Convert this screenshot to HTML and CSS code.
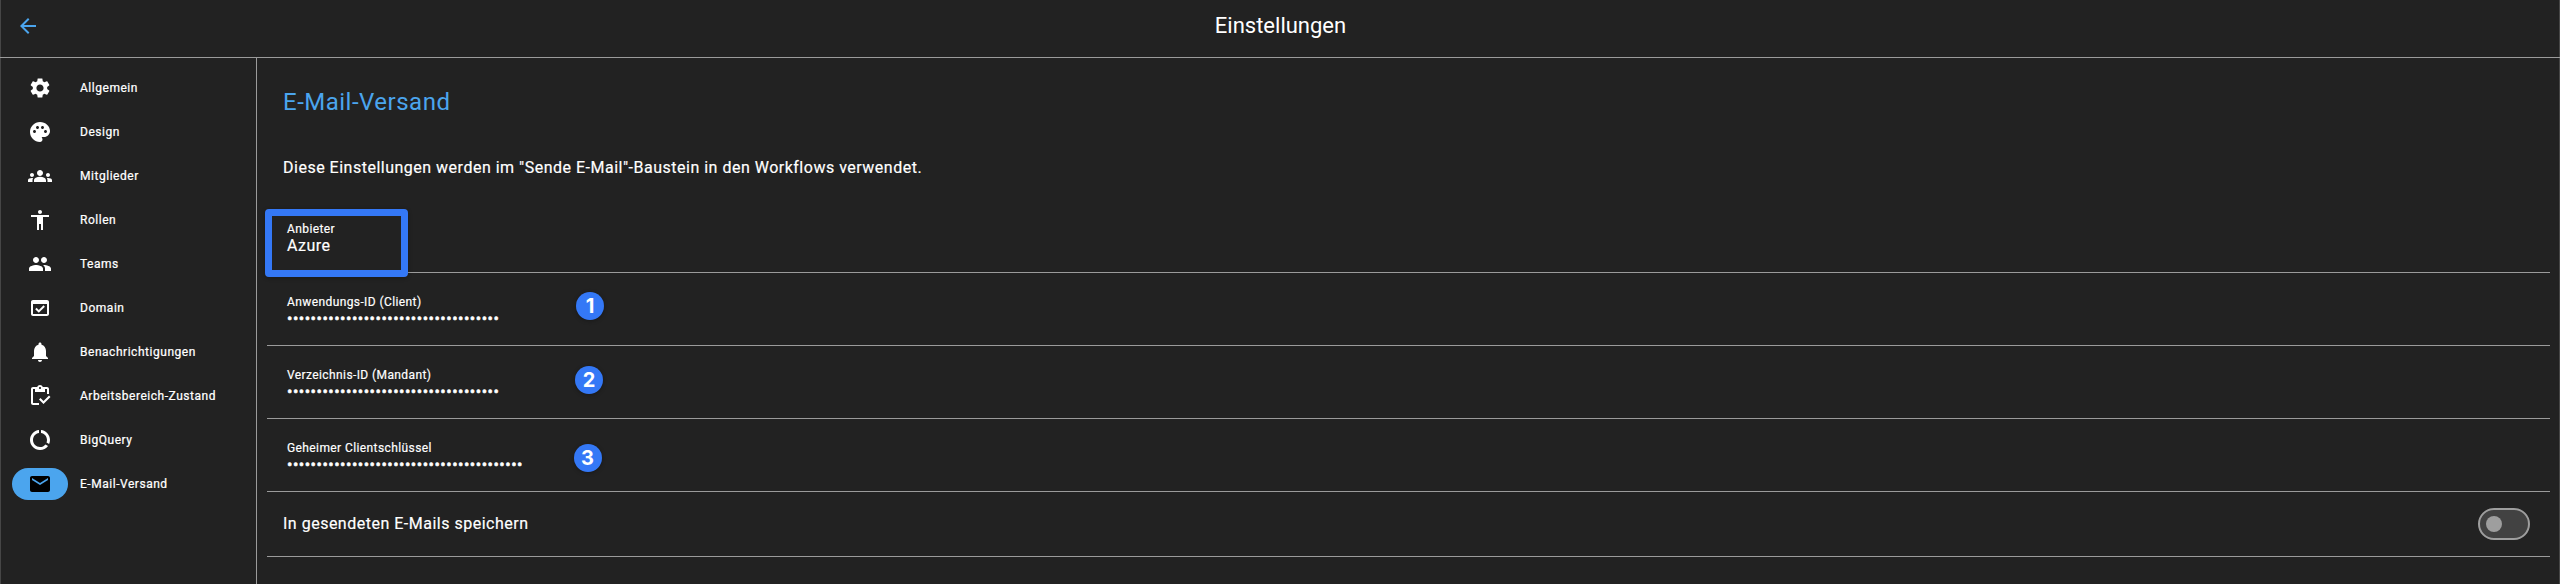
FILE: index.html
```html
<!DOCTYPE html>
<html lang="de">
<head>
<meta charset="utf-8">
<title>Einstellungen</title>
<link rel="stylesheet" href="styles.css">
</head>
<body>
<div class="app">
  <header class="topbar">
    <svg class="icon back" viewBox="0 0 24 24"><path d="M20 11H7.83l5.59-5.59L12 4l-8 8 8 8 1.41-1.41L7.83 13H20v-2z"/></svg>
    <h1 class="topbar-title">Einstellungen</h1>
  </header>
  <div class="body">
    <nav class="sidebar">
      <a class="nav-item"><span class="pill"><svg class="icon" viewBox="0 0 24 24"><path d="M19.14 12.94c.04-.3.06-.61.06-.94 0-.32-.02-.64-.07-.94l2.03-1.58c.18-.14.23-.41.12-.61l-1.92-3.32c-.12-.22-.37-.29-.59-.22l-2.39.96c-.5-.38-1.03-.7-1.62-.94l-.36-2.54c-.04-.24-.24-.41-.48-.41h-3.84c-.24 0-.43.17-.47.41l-.36 2.54c-.59.24-1.13.57-1.62.94l-2.39-.96c-.22-.08-.47 0-.59.22L2.74 8.87c-.12.21-.08.47.12.61l2.03 1.58c-.05.3-.09.63-.09.94s.02.64.07.94l-2.03 1.58c-.18.14-.23.41-.12.61l1.92 3.32c.12.22.37.29.59.22l2.39-.96c.5.38 1.03.7 1.62.94l.36 2.54c.05.24.24.41.48.41h3.84c.24 0 .44-.17.47-.41l.36-2.54c.59-.24 1.13-.56 1.62-.94l2.39.96c.22.08.47 0 .59-.22l1.92-3.32c.12-.22.07-.47-.12-.61l-2.01-1.58zM12 15.6c-1.98 0-3.6-1.62-3.6-3.6s1.62-3.6 3.6-3.6 3.6 1.62 3.6 3.6-1.62 3.6-3.6 3.6z"/></svg></span><span>Allgemein</span></a>
      <a class="nav-item"><span class="pill"><svg class="icon" viewBox="0 0 24 24"><path d="M12 2C6.49 2 2 6.49 2 12s4.49 10 10 10c1.38 0 2.5-1.12 2.5-2.5 0-.61-.23-1.2-.64-1.67-.08-.1-.13-.21-.13-.33 0-.28.22-.5.5-.5H16c3.31 0 6-2.69 6-6 0-4.96-4.49-9-10-9zm-5.5 11c-.83 0-1.5-.67-1.5-1.5S5.67 10 6.5 10s1.5.67 1.5 1.5S7.33 13 6.5 13zm3-4C8.67 9 8 8.33 8 7.500S8.670 6 9.500 6s1.500.670 1.500 1.500S10.330 9 9.500 9zm5 0c-.83 0-1.500-.670-1.500-1.500S13.670 6 14.500 6s1.500.670 1.500 1.500S15.330 9 14.500 9zm3 4c-.83 0-1.500-.670-1.500-1.500s.670-1.500 1.500-1.500 1.500.670 1.500 1.500-.670 1.500-1.500 1.500z"/></svg></span><span>Design</span></a>
      <a class="nav-item"><span class="pill"><svg class="icon" viewBox="0 0 24 24"><path d="M12 12.750c1.630 0 3.070.390 4.240.900 1.080.480 1.760 1.560 1.760 2.730V18H6v-1.610c0-1.180.680-2.260 1.760-2.730 1.170-.520 2.610-.910 4.240-.910zM4 13c1.100 0 2-.900 2-2s-.900-2-2-2-2 .900-2 2 .900 2 2 2zm1.130 1.100C4.760 14.040 4.390 14 4 14c-.990 0-1.930.210-2.780.580C.480 14.900 0 15.620 0 16.430V18h4.500v-1.610c0-.830.230-1.610.630-2.290zM20 13c1.100 0 2-.900 2-2s-.900-2-2-2-2 .900-2 2 .900 2 2 2zm4 3.430c0-.810-.480-1.530-1.220-1.850-.850-.370-1.790-.580-2.780-.580-.390 0-.760.040-1.130.100.400.680.630 1.460.630 2.290V18H24v-1.570zM12 6c1.660 0 3 1.340 3 3s-1.340 3-3 3-3-1.340-3-3 1.340-3 3-3z"/></svg></span><span>Mitglieder</span></a>
      <a class="nav-item"><span class="pill"><svg class="icon" viewBox="0 0 24 24"><path d="M12 2c1.100 0 2 .900 2 2s-.900 2-2 2-2-.900-2-2 .900-2 2-2zm9 7h-6v13h-2v-6h-2v6H9V9H3V7h18v2z"/></svg></span><span>Rollen</span></a>
      <a class="nav-item"><span class="pill"><svg class="icon" viewBox="0 0 24 24"><path d="M16 11c1.660 0 2.990-1.340 2.990-3S17.660 5 16 5s-3 1.340-3 3 1.340 3 3 3zm-8 0c1.660 0 2.990-1.340 2.990-3S9.660 5 8 5 5 6.340 5 8s1.340 3 3 3zm0 2c-2.330 0-7 1.170-7 3.500V19h14v-2.500C15 14.170 10.330 13 8 13zm8 0c-.290 0-.620.020-.970.050 1.160.840 1.970 1.970 1.970 3.450V19h6v-2.500c0-2.330-4.670-3.500-7-3.500z"/></svg></span><span>Teams</span></a>
      <a class="nav-item"><span class="pill"><svg class="icon" viewBox="0 0 24 24"><path d="M19 4H5c-1.110 0-2 .900-2 2v12c0 1.100.890 2 2 2h14c1.100 0 2-.900 2-2V6c0-1.100-.890-2-2-2zm0 14H5V8h14v10z"/><path d="M15.500 9.300l1.400 1.400-6.100 6.100-3.600-3.600 1.400-1.400 2.200 2.200z"/></svg></span><span>Domain</span></a>
      <a class="nav-item"><span class="pill"><svg class="icon" viewBox="0 0 24 24"><path d="M12 22c1.100 0 2-.900 2-2h-4c0 1.100.890 2 2 2zm6-6v-5c0-3.070-1.640-5.640-4.500-6.320V4c0-.830-.670-1.500-1.500-1.500s-1.500.670-1.500 1.500v.680C7.630 5.360 6 7.920 6 11v5l-2 2v1h16v-1l-2-2z"/></svg></span><span>Benachrichtigungen</span></a>
      <a class="nav-item"><span class="pill"><svg class="icon" viewBox="0 0 24 24"><path d="M5 5h2v3h10V5h2v5h2V5c0-1.100-.900-2-2-2h-4.180C14.400 1.840 13.300 1 12 1s-2.400.840-2.820 2H5c-1.100 0-2 .900-2 2v14c0 1.100.900 2 2 2h6v-2H5V5zm7-2c.550 0 1 .450 1 1s-.450 1-1 1-1-.450-1-1 .450-1 1-1z"/><path d="M21 11.500L15.510 17l-3.010-3-1.500 1.500 4.510 4.500 6.990-7z"/></svg></span><span>Arbeitsbereich-Zustand</span></a>
      <a class="nav-item"><span class="pill"><svg class="icon" viewBox="0 0 24 24"><path d="M13 2.050v3.030c3.390.490 6 3.390 6 6.920 0 .900-.180 1.750-.480 2.540l2.600 1.530c.560-1.240.880-2.620.880-4.070 0-5.180-3.950-9.450-9-9.950zM12 19c-3.870 0-7-3.130-7-7 0-3.530 2.610-6.430 6-6.920V2.050c-5.060.500-9 4.760-9 9.950 0 5.520 4.470 10 9.990 10 3.310 0 6.240-1.610 8.060-4.090l-2.600-1.530C16.170 17.980 14.210 19 12 19z"/></svg></span><span>BigQuery</span></a>
      <a class="nav-item active"><span class="pill"><svg class="icon" viewBox="0 0 24 24"><path d="M20 4H4c-1.100 0-1.990.900-1.990 2L2 18c0 1.100.900 2 2 2h16c1.100 0 2-.900 2-2V6c0-1.100-.900-2-2-2zm0 4l-8 5-8-5V6l8 5 8-5v2z"/></svg></span><span>E-Mail-Versand</span></a>
    </nav>
    <main class="content">
      <h2 class="title">E-Mail-Versand</h2>
      <p class="intro">Diese Einstellungen werden im "Sende E-Mail"-Baustein in den Workflows verwendet.</p>
      <div class="field"><span class="label">Anbieter</span><span class="value">Azure</span><span class="highlight"></span></div>
      <div class="field"><span class="label">Anwendungs-ID (Client)</span><span class="value secret">••••••••••••••••••••••••••••••••••••</span><span class="badge badge-1">1</span></div>
      <div class="field"><span class="label">Verzeichnis-ID (Mandant)</span><span class="value secret">••••••••••••••••••••••••••••••••••••</span><span class="badge badge-2">2</span></div>
      <div class="field"><span class="label">Geheimer Clientschlüssel</span><span class="value secret">••••••••••••••••••••••••••••••••••••••••</span><span class="badge badge-3">3</span></div>
      <div class="switch-row"><span class="switch-label">In gesendeten E-Mails speichern</span><span class="switch"><span class="knob"></span></span></div>
    </main>
  </div>
</div>
</body>
</html>
```

FILE: styles.css
```css
* { box-sizing: border-box; }

body {
  margin: 0;
  background: #222222;
  color: #fff;
  font-family: Roboto, "Liberation Sans", sans-serif;
  font-weight: 400;
}

.app {
  height: 584px;
  display: flex;
  flex-direction: column;
  overflow: hidden;
  box-shadow: inset 1px 0 #464646, inset -1px 0 #464646;
}

.icon { width: 24px; height: 24px; fill: currentColor; display: block; }

.topbar {
  height: 58px;
  flex: none;
  display: grid;
  grid-template-columns: 56px 1fr 56px;
  border-bottom: 1px solid #9b9b9b;
}

.back { margin: 14px 0 0 16px; color: #4ba5ee; }

.topbar-title {
  margin: 10px 0 0 1px;
  text-align: center;
  font-size: 22px;
  font-weight: 400;
  line-height: 32px;
}

.body { flex: 1; display: flex; min-height: 0; }

.sidebar {
  width: 257px;
  flex: none;
  padding: 8px 12px;
  border-right: 1px solid #9b9b9b;
}

.nav-item {
  height: 44px;
  display: flex;
  align-items: center;
  gap: 12px;
  font-size: 12px;
  letter-spacing: 0.53px;
  -webkit-text-stroke: 0.22px currentColor;
}

.pill {
  width: 56px;
  height: 32px;
  border-radius: 16px;
  display: grid;
  place-items: center;
  color: #fff;
}

.active .pill { background: #4ba5ee; color: #000; }

.content { flex: 1; padding: 28px 10px 0; }

.title {
  margin: 0 0 0 16px;
  font-size: 24px;
  font-weight: 400;
  line-height: 32px;
  letter-spacing: 0.5px;
  color: #4ba5ee;
}

.intro {
  margin: 38px 0 0 16px;
  font-size: 16px;
  line-height: 24px;
  letter-spacing: 0.5px;
  -webkit-text-stroke: 0.18px currentColor;
}

.field {
  position: relative;
  height: 73px;
  padding: 21px 20px 0;
  display: flex;
  flex-direction: column;
  border-bottom: 1px solid #9b9b9b;
}

.intro + .field { margin-top: 20px; }

.label { font-size: 12px; line-height: 16px; letter-spacing: 0.4px; -webkit-text-stroke: 0.18px currentColor; }
.value { font-size: 16px; line-height: 18px; letter-spacing: 0.5px; -webkit-text-stroke: 0.18px currentColor; }
.secret { -webkit-text-stroke-width: 0.5px; }

.highlight {
  position: absolute;
  left: -2px;
  top: 9px;
  width: 143px;
  height: 68px;
  border: 7px solid #3478f6;
  border-radius: 4px;
  box-shadow: 0 1px 4px rgba(0, 0, 0, 0.3);
}

.badge {
  position: absolute;
  width: 28px;
  height: 28px;
  border-radius: 50%;
  background: #3478f6;
  font: 700 20px/28px Inter, sans-serif;
  text-align: center;
  box-shadow: 0 1px 4px rgba(0, 0, 0, 0.3);
}

.badge-1 { left: 309px; top: 19px; }
.badge-2 { left: 308px; top: 20px; }
.badge-3 { left: 306.5px; top: 25px; }

.switch-row {
  height: 65px;
  padding: 0 20px 0 16px;
  display: flex;
  align-items: center;
  justify-content: space-between;
  border-bottom: 1px solid #9b9b9b;
}

.switch-label {
  padding-bottom: 2px;
  font-size: 16px;
  letter-spacing: 0.5px;
  -webkit-text-stroke: 0.18px currentColor;
}

.switch {
  width: 52px;
  height: 32px;
  padding-left: 6px;
  display: flex;
  align-items: center;
  border: 2px solid #9e9e9e;
  border-radius: 16px;
  background: #424242;
}

.knob { width: 16px; height: 16px; border-radius: 50%; background: #9e9e9e; }
```
